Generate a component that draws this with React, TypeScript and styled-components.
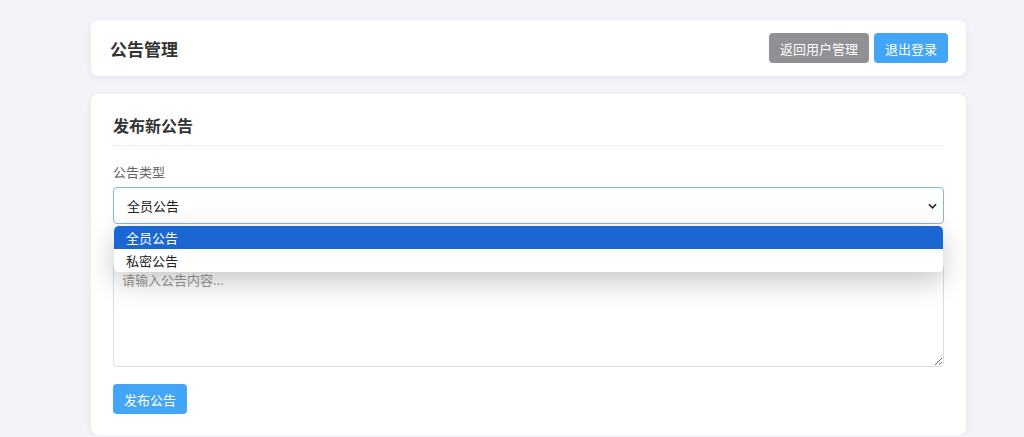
import styled, { createGlobalStyle } from "styled-components";

const GlobalStyle = createGlobalStyle`
  body {
    margin: 0;
    background: #f3f4f7;
    font-family: "Noto Sans CJK SC", "Noto Sans", sans-serif;
    color: #333;
  }
`;

function App() {
  return (
    <Page>
      <GlobalStyle />
      <HeaderCard>
        <Title>公告管理</Title>
        <Actions>
          <Button $variant="gray">返回用户管理</Button>
          <Button $variant="blue">退出登录</Button>
        </Actions>
      </HeaderCard>

      <Card>
        <SectionTitle>发布新公告</SectionTitle>
        <Field>
          <Label>公告类型</Label>
          <SelectWrap>
            <SelectBox>
              <span>全员公告</span>
              <Chevron viewBox="0 0 10 6">
                <path d="M1 1l4 4 4-4" fill="none" stroke="#222" strokeWidth="1.8" />
              </Chevron>
            </SelectBox>
            <OptionList>
              <Option $selected>全员公告</Option>
              <Option>私密公告</Option>
            </OptionList>
          </SelectWrap>
        </Field>
        <Field>
          <Label>公告内容</Label>
          <TextArea placeholder="请输入公告内容..." />
        </Field>
        <Submit>
          <Button $variant="blue">发布公告</Button>
        </Submit>
      </Card>
    </Page>
  );
}

const Page = styled.div`
  display: flex;
  flex-direction: column;
  gap: 18px;
  width: 875px;
  margin-left: 91px;
  padding-top: 20px;
`;

const HeaderCard = styled.div`
  display: flex;
  align-items: center;
  justify-content: space-between;
  height: 56px;
  padding: 0 18px 0 19px;
  background: #fff;
  border-radius: 8px;
  box-shadow: 0 2px 10px rgba(0, 0, 0, 0.06);
`;

const Title = styled.h1`
  margin: 0;
  font-size: 17px;
  font-weight: 700;
  color: #333;
`;

const Actions = styled.div`
  display: flex;
  gap: 5px;
`;

const Button = styled.button<{ $variant: "gray" | "blue" }>`
  height: 30px;
  padding: 0 11px;
  border: none;
  border-radius: 4px;
  font-family: inherit;
  font-size: 13px;
  color: #fff;
  background: ${(p) => (p.$variant === "gray" ? "#8f9194" : "#42a5f5")};
`;

const Card = styled.div`
  display: flex;
  flex-direction: column;
  height: 341px;
  box-sizing: border-box;
  padding: 19px 22px 22px 22px;
  background: #fff;
  border-radius: 8px;
  box-shadow: 0 2px 10px rgba(0, 0, 0, 0.06);
`;

const SectionTitle = styled.h2`
  margin: 0 0 17px;
  padding-bottom: 8px;
  font-size: 16px;
  font-weight: 700;
  color: #333;
  border-bottom: 1px solid #eee;
`;

const Field = styled.div`
  display: flex;
  flex-direction: column;
  margin-bottom: 16px;
`;

const Label = styled.label`
  font-size: 13px;
  color: #666;
  margin-bottom: 6px;
  line-height: 18px;
`;

const SelectWrap = styled.div`
  position: relative;
`;

const SelectBox = styled.div`
  display: flex;
  align-items: center;
  justify-content: space-between;
  height: 37px;
  box-sizing: border-box;
  padding: 0 6px 0 13px;
  border: 1px solid #84b6e0;
  border-radius: 4px;
  font-size: 13px;
  color: #222;
`;

const Chevron = styled.svg`
  width: 9px;
  height: 6px;
`;

const OptionList = styled.div`
  position: absolute;
  top: 39px;
  left: 1px;
  right: 1px;
  z-index: 2;
  display: flex;
  flex-direction: column;
  background: #fff;
  border-radius: 5px;
  overflow: hidden;
  box-shadow: 0 10px 28px rgba(0, 0, 0, 0.22);
`;

const Option = styled.div<{ $selected?: boolean }>`
  height: 23px;
  line-height: 23px;
  padding: 0 12px;
  font-size: 13px;
  color: ${(p) => (p.$selected ? "#fff" : "#222")};
  background: ${(p) => (p.$selected ? "#1a66d2" : "#fff")};
`;

const TextArea = styled.textarea`
  height: 103px;
  box-sizing: border-box;
  padding: 5px 8px;
  border: 1px solid #ddd;
  border-radius: 4px;
  font-family: inherit;
  font-size: 13px;
  resize: vertical;
  &::placeholder {
    color: #999;
  }
`;

const Submit = styled.div`
  display: flex;
  margin-top: 1px;
`;

export default App;
